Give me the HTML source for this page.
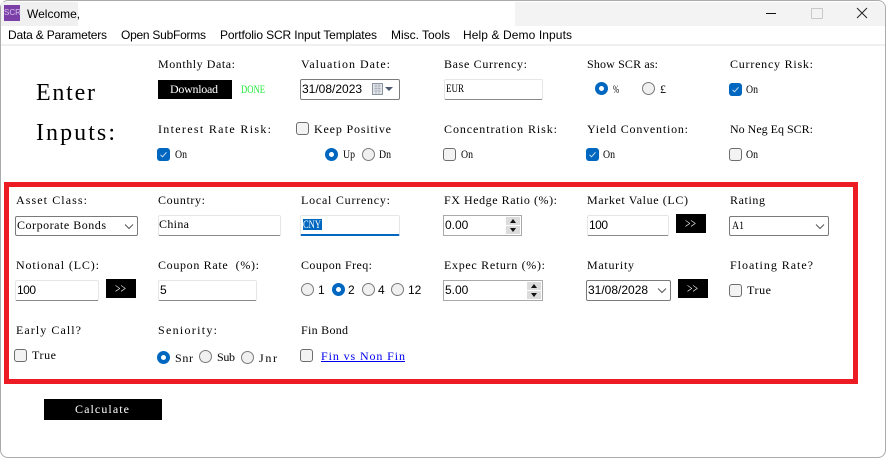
<!DOCTYPE html>
<html><head><meta charset="utf-8">
<style>
html,body{margin:0;padding:0;width:886px;height:458px;overflow:hidden;background:#fff}
#w{position:relative;width:886px;height:458px;overflow:hidden;background:#fff}
#w div,#w svg{position:absolute}
.s{font:12px/16px "Liberation Sans",sans-serif;color:#000;white-space:pre}
.f{background:#fff;border:1px solid #e6e6e6;border-bottom:1px solid #8a8a8a;border-radius:2px;box-sizing:border-box}
.c{background:#fff;border:1px solid #7a7a7a;border-radius:2px;box-sizing:border-box}
.n{background:#fff;border:1px solid #a9a9a9;box-sizing:border-box}
.b{background:#000}
.k{width:13px;height:13px;box-sizing:border-box;border:1px solid #6e6e6e;border-radius:3px;background:#f3f3f3}
.kc{width:13px;height:13px;background:#0067c0;border-radius:3px}
.r{width:13px;height:13px;box-sizing:border-box;border:1px solid #7a7a7a;border-radius:50%;background:#f0f0f0}
.ro{width:13px;height:13px;box-sizing:border-box;border:4px solid #0067c0;border-radius:50%;background:#fff}
#t text{font-family:"Liberation Serif",serif;font-size:12px;fill:#000}
#t text.m{font-family:"Liberation Sans",sans-serif}
#t text.h{font-size:24px}
#t text.w{fill:#fff}
#t text.g{font-size:14px}
</style></head><body><div id="w">
<div style="left:0;top:0;width:886px;height:458px;box-sizing:border-box;border:1px solid #ababab;border-radius:8px"></div>
<div style="left:1px;top:2px;width:77px;height:24px;background:#f0f0f0"></div>
<div style="left:515px;top:2px;width:370px;height:24px;background:#f3f3f3;border-top-right-radius:7px"></div>
<div style="left:1px;top:44px;width:884px;height:2px;background:#f0f0f0"></div>
<div style="left:4px;top:5px;width:16px;height:16px;background:#7b3fa8"></div>
<div style="left:4px;top:8px;width:16px;height:10px;color:#d9c4ea;font:8px/10px 'Liberation Sans',sans-serif;text-align:center">SCR</div>
<div class="s" style="left:27px;top:6px">Welcome,</div>
<div style="left:766px;top:13px;width:10px;height:1px;background:#111"></div>
<div style="left:811px;top:8px;width:10px;height:9px;border:1px solid #c8c8c8;border-radius:1px"></div>
<svg style="left:856px;top:7px" width="12" height="12" viewBox="0 0 12 12"><path d="M1 1L11 11M11 1L1 11" stroke="#222" stroke-width="1" fill="none"/></svg>

<div class="b" style="left:158px;top:80px;width:74px;height:19px"></div>
<div class="c" style="left:300px;top:79px;width:100px;height:21px"></div>
<div class="s" style="left:302px;top:81px">31/08/2023</div>
<svg style="left:372px;top:83px" width="26" height="12" viewBox="0 0 26 12"><rect x=".5" y=".5" width="10" height="11" fill="#e3e6ea" stroke="#8a94a0"/><path d="M2 3h7M2 5.500h7M2 8h7M4 1v10M7 1v10" stroke="#a9b0ba" stroke-width=".8"/><path d="M13 4h8l-4 4z" fill="#4a5a70"/></svg>
<div class="f" style="left:444px;top:79px;width:99px;height:21px"></div>
<div class="ro" style="left:595px;top:82px"></div>
<div class="r" style="left:642px;top:82px"></div>
<svg class="kc" style="left:729px;top:83px" viewBox="0 0 13 13"><path d="M3.500 6.800l2 2 4-4.500" stroke="#cfe3f5" fill="none"/></svg>

<div class="k" style="left:296px;top:122px"></div>
<svg class="kc" style="left:157px;top:148px" viewBox="0 0 13 13"><path d="M3.500 6.800l2 2 4-4.500" stroke="#cfe3f5" fill="none"/></svg>
<div class="ro" style="left:325px;top:148px"></div>
<div class="r" style="left:362px;top:148px"></div>
<div class="k" style="left:443px;top:148px"></div>
<svg class="kc" style="left:586px;top:148px" viewBox="0 0 13 13"><path d="M3.500 6.800l2 2 4-4.500" stroke="#cfe3f5" fill="none"/></svg>
<div class="k" style="left:729px;top:148px"></div>

<div style="left:4px;top:182px;width:854px;height:202px;box-sizing:border-box;border:5px solid #ed1c24"></div>

<div class="c" style="left:15px;top:216px;width:123px;height:20px"></div>
<svg style="left:124px;top:223px" width="10" height="7" viewBox="0 0 10 7"><path d="M1 1.500l4 4 4-4" stroke="#555" fill="none"/></svg>
<div class="f" style="left:158px;top:215px;width:123px;height:21px"></div>
<div class="f" style="left:300px;top:215px;width:100px;height:21px;border-bottom:2px solid #0067c0"></div>
<div style="left:303px;top:219px;width:19px;height:11px;background:#0067c0"></div>
<div class="n" style="left:443px;top:215px;width:79px;height:21px"></div>
<div class="s" style="left:445px;top:217px">0.00</div>
<svg style="left:506px;top:217px" width="14" height="17" viewBox="0 0 14 17"><rect width="14" height="8" fill="#dcdcdc"/><rect y="9" width="14" height="8" fill="#dcdcdc"/><path d="M7 2l3 4H4zM4 11h6l-3 4z" fill="#111"/></svg>
<div class="f" style="left:587px;top:215px;width:82px;height:21px"></div>
<div class="s" style="left:589px;top:217px;letter-spacing:-.5px">100</div>
<div class="b" style="left:676px;top:214px;width:30px;height:19px"></div>
<div class="c" style="left:729px;top:216px;width:100px;height:20px"></div>
<svg style="left:815px;top:223px" width="10" height="7" viewBox="0 0 10 7"><path d="M1 1.500l4 4 4-4" stroke="#555" fill="none"/></svg>

<div class="f" style="left:15px;top:280px;width:84px;height:21px"></div>
<div class="s" style="left:17px;top:282px;letter-spacing:-.5px">100</div>
<div class="b" style="left:106px;top:279px;width:30px;height:19px"></div>
<div class="f" style="left:158px;top:280px;width:99px;height:21px"></div>
<div class="s" style="left:160px;top:282px">5</div>
<div class="r" style="left:301px;top:283px"></div><div class="s" style="left:318px;top:282px">1</div>
<div class="ro" style="left:332px;top:283px"></div><div class="s" style="left:348px;top:282px">2</div>
<div class="r" style="left:362px;top:283px"></div><div class="s" style="left:378px;top:282px">4</div>
<div class="r" style="left:391px;top:283px"></div><div class="s" style="left:408px;top:282px">12</div>
<div class="n" style="left:443px;top:280px;width:100px;height:21px"></div>
<div class="s" style="left:445px;top:282px">5.00</div>
<svg style="left:527px;top:282px" width="14" height="17" viewBox="0 0 14 17"><rect width="14" height="8" fill="#dcdcdc"/><rect y="9" width="14" height="8" fill="#dcdcdc"/><path d="M7 2l3 4H4zM4 11h6l-3 4z" fill="#111"/></svg>
<div class="c" style="left:586px;top:280px;width:85px;height:21px"></div>
<div class="s" style="left:588px;top:282px">31/08/2028</div>
<svg style="left:657px;top:287px" width="10" height="7" viewBox="0 0 10 7"><path d="M1 1.500l4 4 4-4" stroke="#555" fill="none"/></svg>
<div class="b" style="left:678px;top:279px;width:30px;height:19px"></div>
<div class="k" style="left:729px;top:284px"></div>

<div class="k" style="left:14px;top:349px"></div>
<div class="ro" style="left:157px;top:351px"></div>
<div class="r" style="left:199px;top:350px"></div>
<div class="r" style="left:241px;top:351px"></div>
<div class="k" style="left:300px;top:349px"></div>
<div class="b" style="left:44px;top:399px;width:118px;height:21px"></div>
<div style="left:321px;top:361px;width:84px;height:1px;background:#0000ee"></div>

<svg id="t" style="left:0;top:0" width="886" height="458" viewBox="0 0 886 458">
<text class="m" x="8" y="39" textLength="99">Data &amp; Parameters</text>
<text class="m" x="121" y="39" textLength="85">Open SubForms</text>
<text class="m" x="220" y="39" textLength="157">Portfolio SCR Input Templates</text>
<text class="m" x="391" y="39" textLength="59">Misc. Tools</text>
<text class="m" x="463" y="39" textLength="109">Help &amp; Demo Inputs</text>

<text class="h" x="36" y="100" textLength="59">Enter</text>
<text class="h" x="36" y="140" textLength="79">Inputs:</text>

<text x="158" y="68" textLength="77">Monthly Data:</text>
<text x="301" y="68" textLength="89">Valuation Date:</text>
<text x="444" y="68" textLength="83">Base Currency:</text>
<text x="587" y="68" textLength="71">Show SCR as:</text>
<text x="730" y="68" textLength="83">Currency Risk:</text>
<text class="w" x="170" y="93" textLength="48">Download</text>
<text x="241" y="93" textLength="24" lengthAdjust="spacingAndGlyphs" style="fill:#22e83a">DONE</text>
<text x="446" y="92" textLength="18" lengthAdjust="spacingAndGlyphs">EUR</text>
<text x="613" y="93" textLength="6" lengthAdjust="spacingAndGlyphs">%</text>
<text x="660" y="93">£</text>
<text x="746" y="93" textLength="12" lengthAdjust="spacingAndGlyphs">On</text>

<text x="158" y="133" textLength="113">Interest Rate Risk:</text>
<text x="314" y="133" textLength="77">Keep Positive</text>
<text x="444" y="133" textLength="113">Concentration Risk:</text>
<text x="587" y="133" textLength="101">Yield Convention:</text>
<text x="730" y="133" textLength="83">No Neg Eq SCR:</text>
<text x="175" y="158" textLength="12" lengthAdjust="spacingAndGlyphs">On</text>
<text x="343" y="158" textLength="12" lengthAdjust="spacingAndGlyphs">Up</text>
<text x="379" y="158" textLength="12" lengthAdjust="spacingAndGlyphs">Dn</text>
<text x="461" y="158" textLength="12" lengthAdjust="spacingAndGlyphs">On</text>
<text x="603" y="158" textLength="12" lengthAdjust="spacingAndGlyphs">On</text>
<text x="746" y="158" textLength="12" lengthAdjust="spacingAndGlyphs">On</text>

<text x="16" y="204" textLength="71">Asset Class:</text>
<text x="158" y="204" textLength="47">Country:</text>
<text x="301" y="204" textLength="89">Local Currency:</text>
<text x="444" y="204" textLength="113">FX Hedge Ratio (%):</text>
<text x="587" y="204" textLength="101">Market Value (LC)</text>
<text x="730" y="204" textLength="35">Rating</text>
<text x="17" y="229" textLength="89">Corporate Bonds</text>
<text x="159" y="228" textLength="30">China</text>
<text class="w" x="303" y="228" textLength="18" lengthAdjust="spacingAndGlyphs">CNY</text>
<text class="w g" x="685" y="228" textLength="11" lengthAdjust="spacingAndGlyphs">&gt;&gt;</text>
<text x="732" y="229" textLength="12" lengthAdjust="spacingAndGlyphs">A1</text>

<text x="16" y="269" textLength="83">Notional (LC):</text>
<text x="158" y="269" textLength="101">Coupon Rate&#160;&#160;(%):</text>
<text x="301" y="269" textLength="71">Coupon Freq:</text>
<text x="444" y="269" textLength="101">Expec Return (%):</text>
<text x="587" y="269" textLength="47">Maturity</text>
<text x="730" y="269" textLength="83">Floating Rate?</text>
<text class="w g" x="115" y="293" textLength="11" lengthAdjust="spacingAndGlyphs">&gt;&gt;</text>
<text class="w g" x="687" y="293" textLength="11" lengthAdjust="spacingAndGlyphs">&gt;&gt;</text>
<text x="747" y="294" textLength="24">True</text>

<text x="16" y="334" textLength="65">Early Call?</text>
<text x="158" y="334" textLength="59">Seniority:</text>
<text x="301" y="334" textLength="47">Fin Bond</text>
<text x="32" y="359" textLength="24">True</text>
<text x="175" y="362" textLength="18">Snr</text>
<text x="217" y="361" textLength="18">Sub</text>
<text x="259" y="362" textLength="18">Jnr</text>
<a href="#"><text x="321" y="360" textLength="84" style="fill:#0000ee">Fin vs Non Fin</text></a>
<text class="w" x="75" y="413" textLength="54">Calculate</text>
</svg>
</div></body></html>
